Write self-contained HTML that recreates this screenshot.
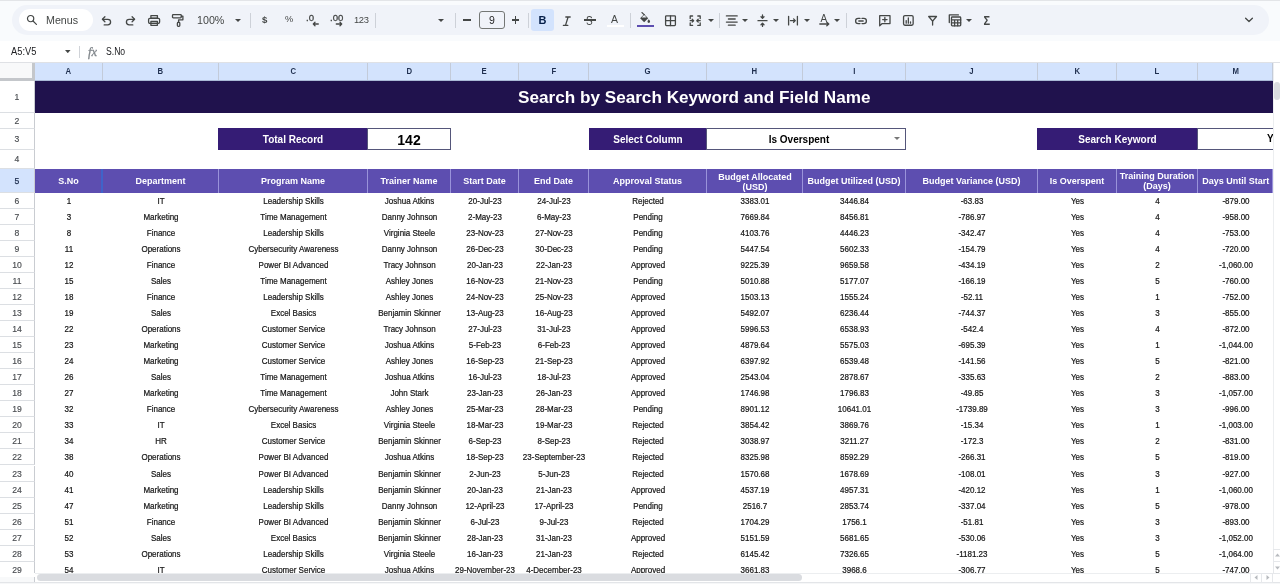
<!DOCTYPE html>
<html><head><meta charset="utf-8"><title>Sheet</title>
<style>
*{box-sizing:border-box}
html,body{margin:0;padding:0}
body{width:1280px;height:584px;overflow:hidden;background:#fff;font-family:"Liberation Sans",sans-serif;position:relative;color:#000}
.abs,.abs *{position:absolute}
div,span,svg{position:absolute}
.tb{left:12px;top:5px;width:1257px;height:30px;border-radius:15px;background:#f0f3f9}
.menus{left:19px;top:9px;width:74px;height:22px;border-radius:11px;background:#fff}
.t{white-space:nowrap;line-height:1}
.ic{stroke:#444746;fill:none;stroke-width:1.3;stroke-linecap:round;stroke-linejoin:round}
.sep{width:1px;background:#cdd1d8;top:13px;height:15px}
.ch{top:63px;height:18px;background:#d3e3fd;border-right:1px solid #c3cbd9;font-size:9px;font-weight:700;color:#1f2f4f;text-align:center;line-height:17px}
.ch b{position:static;display:inline-block;transform:scaleX(.86)}
.rh{left:0;width:35px;background:#fff;border-bottom:1px solid #dcdfe3;border-right:1px solid #c9ccd1;font-size:8.6px;color:#4a4d51;-webkit-text-stroke:.15px #4a4d51;text-align:center}
.hd{top:169px;height:24px;background:#5d4eb0;color:#fff;font-weight:700;font-size:9px;text-align:center;border-right:1px solid #9a93da;display:flex;align-items:center;justify-content:center;line-height:9px;white-space:nowrap}
.c{font-size:8px;text-align:center;white-space:nowrap;height:16px;line-height:16px;color:#151515;-webkit-text-stroke:.2px #151515;transform:translateY(.6px) scaleY(1.09)}
.lab{top:128px;height:22px;background:#351c75;color:#fff;font-weight:700;font-size:10px;text-align:center;line-height:23.5px}
.val{top:128px;height:22px;background:#fff;border:1px solid #55567a;font-weight:700;text-align:center;line-height:22px}
#wrap{left:0;top:0;width:1280px;height:584px;overflow:hidden;will-change:transform}
</style></head><body><div id="wrap">

<div style="left:0;top:0;width:1280px;height:1px;background:#e3e5e8"></div>
<div style="left:0;top:1px;width:1280px;height:40px;background:#f9fbfd"></div>
<div class="tb"></div><div class="menus"></div>
<!-- search -->
<svg style="left:26.3px;top:14px" width="12" height="12" viewBox="0 0 13 13"><circle cx="5" cy="5" r="3.4" class="ic" stroke-width="1.4"/><path d="M7.6 7.6L11.3 11.3" class="ic" stroke-width="1.5"/></svg>
<span class="t" style="left:46px;top:14.7px;font-size:10.7px;color:#444746">Menus</span>
<!-- undo -->
<svg style="left:100px;top:14px" width="13" height="13" viewBox="0 0 13 13"><path d="M4.9 2.8L2.4 5.3L4.9 7.8" class="ic"/><path d="M2.6 5.3H7.8A2.8 2.8 0 0 1 7.8 10.9H4.2" class="ic"/></svg>
<!-- redo -->
<svg style="left:124px;top:14px" width="13" height="13" viewBox="0 0 13 13"><path d="M8.1 2.8L10.6 5.3L8.1 7.8" class="ic"/><path d="M10.4 5.3H5.2A2.8 2.8 0 0 0 5.2 10.9H8.8" class="ic"/></svg>
<!-- print -->
<svg style="left:147px;top:14px" width="15" height="13" viewBox="0 0 15 13"><rect x="3.9" y="1.6" width="6.5" height="2.6" class="ic"/><rect x="1.6" y="4.3" width="11" height="5" rx="1.2" class="ic"/><rect x="3.9" y="7.5" width="6.5" height="3.8" class="ic" fill="#f0f3f9"/></svg>
<!-- paint format -->
<svg style="left:171px;top:13px" width="13" height="15" viewBox="0 0 13 15"><rect x="1.5" y="1.6" width="8.8" height="3.2" rx="0.8" class="ic"/><path d="M10.3 3.2H11.9V6.8H7.6V9.4" class="ic"/><rect x="6.4" y="9.4" width="2.4" height="4" rx="0.8" class="ic"/></svg>
<span class="t" style="left:197px;top:15.2px;font-size:10.7px;color:#444746">100%</span>
<svg style="left:235px;top:19px" width="6" height="3" viewBox="0 0 6 3"><path d="M0 0h6L3 3z" fill="#444746"/></svg>
<div class="sep" style="left:250px"></div>
<span class="t" style="left:262px;top:14.8px;font-size:9.6px;font-weight:700;color:#444746">$</span>
<span class="t" style="left:285px;top:15.3px;font-size:9.2px;color:#444746">%</span>
<!-- .0 <- -->
<span class="t" style="left:306px;top:13.4px;font-size:9.6px;color:#444746;-webkit-text-stroke:.3px #444746">.0</span>
<svg style="left:312px;top:21.3px" width="8" height="6" viewBox="0 0 8 6"><path d="M6.3 3H1.3M3 1.3L1.3 3L3 4.7" class="ic" stroke-width="1.1"/></svg>
<!-- .00 -> -->
<span class="t" style="left:330px;top:13.4px;font-size:9.6px;color:#444746;-webkit-text-stroke:.3px #444746">.00</span>
<svg style="left:335px;top:21.3px" width="8" height="6" viewBox="0 0 8 6"><path d="M1.3 3H6.7M5 1.3L6.7 3L5 4.7" class="ic" stroke-width="1.1"/></svg>
<span class="t" style="left:354px;top:15.4px;font-size:9.4px;letter-spacing:-.35px;color:#444746">123</span>
<div class="sep" style="left:375px"></div>
<svg style="left:438px;top:19px" width="6" height="3" viewBox="0 0 6 3"><path d="M0 0h6L3 3z" fill="#444746"/></svg>
<div class="sep" style="left:455px"></div>
<!-- minus -->
<div style="left:463px;top:19.2px;width:8px;height:1.5px;background:#444746"></div>
<div style="left:479px;top:11px;width:26px;height:18px;border:1px solid #747775;border-radius:3px"></div>
<span class="t" style="left:489px;top:15px;font-size:10.5px;color:#1f1f1f">9</span>
<!-- plus -->
<div style="left:511.5px;top:19.3px;width:7.6px;height:1.3px;background:#444746"></div>
<div style="left:514.65px;top:16.2px;width:1.3px;height:7.6px;background:#444746"></div>
<div class="sep" style="left:528px"></div>
<div style="left:531px;top:9px;width:23px;height:22px;border-radius:3px;background:#d3e3fd"></div>
<span class="t" style="left:538.5px;top:15px;font-size:11px;font-weight:700;color:#041e49">B</span>
<svg style="left:562px;top:15.6px" width="10" height="11" viewBox="0 0 10 11"><path d="M3.8 1H8.2M1.4 9.4H5.8M6.1 1L3.5 9.4" class="ic" stroke-width="1.5" stroke-linecap="butt"/></svg>
<!-- strikethrough -->
<span class="t" style="left:586px;top:14.85px;font-size:12.5px;color:#444746;transform:scaleX(.8);transform-origin:left center">S</span>
<div style="left:583.6px;top:18.6px;width:12.8px;height:2.9px;background:#f0f3f9"></div>
<div style="left:584px;top:19.4px;width:12px;height:1.3px;background:#444746"></div>
<span class="t" style="left:611px;top:13.9px;font-size:10.5px;color:#444746">A</span>
<div style="left:607px;top:24.7px;width:17px;height:2.4px;background:#fff"></div>
<div class="sep" style="left:630px"></div>
<!-- fill bucket -->
<svg style="left:637px;top:12px" width="16" height="12" viewBox="0 0 16 12"><path d="M3.1 6.3L7.1 2.3L11.2 6.3L7.1 10.3z" fill="#444746"/><path d="M7.4 2.9L5 0.6" class="ic" stroke-width="1.3"/><path d="M4.6 5.4L7.1 3L9.6 5.4z" fill="#f0f3f9"/><path d="M11.8 7.3C12.6 8.3 13.1 9 13.1 9.6A1.3 1.3 0 0 1 10.5 9.6C10.5 9 11 8.3 11.8 7.3z" fill="#444746"/></svg>
<div style="left:637px;top:24.6px;width:16.7px;height:2.4px;background:#5d4eb0"></div>
<!-- borders -->
<svg style="left:664px;top:14px" width="13" height="13" viewBox="0 0 13 13"><rect x="1.6" y="1.8" width="9.8" height="9.8" rx="0.8" class="ic" stroke-width="1.3"/><path d="M6.5 1.8V11.6M1.6 6.7H11.4" class="ic" stroke-width="1.3"/></svg>
<!-- merge -->
<svg style="left:688px;top:14px" width="14" height="13" viewBox="0 0 14 13"><path d="M4.6 2H2.2V4.6M9.8 2H12.2V4.6M4.6 11.4H2.2V8.8M9.8 11.4H12.2V8.8" class="ic" stroke-width="1.3"/><path d="M2.2 6.7H5.6M4.2 5.3L5.6 6.7L4.2 8.1M12.2 6.7H8.8M10.2 5.3L8.8 6.7L10.2 8.1" class="ic" stroke-width="1.15"/></svg>
<svg style="left:708.4px;top:19px" width="6" height="3" viewBox="0 0 6 3"><path d="M0 0h6L3 3z" fill="#444746"/></svg>
<div class="sep" style="left:719px"></div>
<!-- halign center -->
<svg style="left:725px;top:14px" width="14" height="13" viewBox="0 0 14 13"><path d="M1.4 1.9H12.2M3.4 5H10.2M1.4 8.1H12.2M3.4 11.2H10.2" class="ic" stroke-width="1.4" stroke-linecap="butt"/></svg>
<svg style="left:742px;top:19px" width="6" height="3" viewBox="0 0 6 3"><path d="M0 0h6L3 3z" fill="#444746"/></svg>
<!-- valign middle -->
<svg style="left:756px;top:13px" width="13" height="15" viewBox="0 0 13 15"><path d="M2 7.7H11" class="ic" stroke-width="1.4" stroke-linecap="butt"/><path d="M6.5 2V5M5 3.7L6.5 5.2L8 3.7M6.5 13.4V10.4M5 11.7L6.5 10.2L8 11.7" class="ic" stroke-width="1.15"/></svg>
<svg style="left:773px;top:19px" width="6" height="3" viewBox="0 0 6 3"><path d="M0 0h6L3 3z" fill="#444746"/></svg>
<!-- wrap / overflow -->
<svg style="left:787px;top:14px" width="12" height="13" viewBox="0 0 12 13"><path d="M1.6 2.3V10.9M10.4 2.3V10.9" class="ic" stroke-width="1.3" stroke-linecap="butt"/><path d="M3.4 6.6H8.2M6.6 4.9L8.3 6.6L6.6 8.3" class="ic" stroke-width="1.15"/></svg>
<svg style="left:804px;top:19px" width="6" height="3" viewBox="0 0 6 3"><path d="M0 0h6L3 3z" fill="#444746"/></svg>
<!-- text rotation -->
<span class="t" style="left:820.6px;top:13.7px;font-size:10px;color:#444746">A</span>
<svg style="left:819px;top:21px" width="12" height="6" viewBox="0 0 12 6"><path d="M0.8 3H9.6M7.8 1.2L9.8 3L7.8 4.8" class="ic" stroke-width="1.1"/></svg>
<svg style="left:834px;top:19px" width="6" height="3" viewBox="0 0 6 3"><path d="M0 0h6L3 3z" fill="#444746"/></svg>
<div class="sep" style="left:846px"></div>
<!-- link -->
<svg style="left:854px;top:15.75px" width="14" height="10" viewBox="0 0 14 10"><path d="M6 2.4H4.2A2.6 2.6 0 0 0 4.2 7.6H6M8 2.4H9.8A2.6 2.6 0 0 1 9.8 7.6H8M4.8 5H9.2" class="ic" stroke-width="1.3"/></svg>
<!-- comment -->
<svg style="left:878px;top:14px" width="14" height="14" viewBox="0 0 14 14"><path d="M1.7 1.7H12V9.6H4.2L1.7 11.8z" class="ic" stroke-width="1.25"/><path d="M6.85 3.4V7.8M4.65 5.6H9.05" class="ic" stroke-width="1.3" stroke-linecap="butt"/></svg>
<!-- chart -->
<svg style="left:902px;top:14px" width="13" height="13" viewBox="0 0 13 13"><rect x="1.55" y="1.65" width="9.6" height="9.6" rx="1.4" class="ic" stroke-width="1.25"/><path d="M4.2 9.2V6.6M6.35 9.2V3.9M8.5 9.2V7.9" class="ic" stroke-width="1.2" stroke-linecap="butt"/></svg>
<!-- filter -->
<svg style="left:927px;top:14px" width="11" height="13" viewBox="0 0 11 13"><path d="M1.7 2.5H9.5L5.6 7.2z" class="ic" stroke-width="1.25"/><path d="M5.6 6.6V11" class="ic" stroke-width="1.7" stroke-linecap="butt"/></svg>
<!-- table view -->
<svg style="left:948px;top:13px" width="15" height="14" viewBox="0 0 15 14"><path d="M1.3 9.6V1.9H10.4" class="ic" stroke-width="1.2"/><rect x="3.5" y="4" width="9.2" height="8.8" rx="0.8" class="ic" stroke-width="1.2"/><path d="M3.5 6.9H12.7M3.5 9.8H12.7M6.6 6.9V12.8M9.7 6.9V12.8" class="ic" stroke-width="1"/></svg>
<svg style="left:965.5px;top:19px" width="6" height="3" viewBox="0 0 6 3"><path d="M0 0h6L3 3z" fill="#444746"/></svg>
<!-- sigma -->
<span class="t" style="left:983.5px;top:15.8px;font-size:11px;font-weight:700;color:#444746;transform:scaleY(1.13)">&#931;</span>
<!-- chevron -->
<svg style="left:1244.3px;top:17.3px" width="10" height="6" viewBox="0 0 10 6"><path d="M1.6 1.2L5 4.5L8.4 1.2" class="ic" stroke-width="1.3"/></svg>

<div style="left:0;top:41px;width:1280px;height:21px;background:#fff"></div>
<div style="left:0;top:62px;width:1280px;height:1px;background:#dfe1e5"></div>
<span class="t" style="left:11px;top:47px;font-size:10px;color:#202124;transform:scaleX(.93);transform-origin:left center">A5:V5</span>
<svg style="left:65px;top:50px" width="5.6" height="3.2" viewBox="0 0 7 4"><path d="M0 0h7L3.5 4z" fill="#444746"/></svg>
<div style="left:79px;top:46px;width:1px;height:12px;background:#d0d3d8"></div>
<span class="t" style="left:88px;top:45.5px;font-size:12.5px;font-style:italic;font-family:'Liberation Serif',serif;color:#80868b;-webkit-text-stroke:.3px #80868b">fx</span>
<span class="t" style="left:106px;top:47px;font-size:10px;color:#202124;transform:scaleX(.86);transform-origin:left center">S.No</span>
<div style="left:0;top:63px;width:35px;height:18px;background:#f8f9fa;border-right:3px solid #c4c7cb;border-bottom:3px solid #c4c7cb"></div>
<div class="ch" style="left:35px;width:68px"><b>A</b></div>
<div class="ch" style="left:103px;width:116px"><b>B</b></div>
<div class="ch" style="left:219px;width:149px"><b>C</b></div>
<div class="ch" style="left:368px;width:83px"><b>D</b></div>
<div class="ch" style="left:451px;width:68px"><b>E</b></div>
<div class="ch" style="left:519px;width:70px"><b>F</b></div>
<div class="ch" style="left:589px;width:118px"><b>G</b></div>
<div class="ch" style="left:707px;width:96px"><b>H</b></div>
<div class="ch" style="left:803px;width:103px"><b>I</b></div>
<div class="ch" style="left:906px;width:132px"><b>J</b></div>
<div class="ch" style="left:1038px;width:79px"><b>K</b></div>
<div class="ch" style="left:1117px;width:81px"><b>L</b></div>
<div class="ch" style="left:1198px;width:75px;padding-left:2px"><b>M</b></div>
<div style="left:35px;top:80px;width:1238px;height:1px;background:#a9b9d6"></div>
<div class="rh" style="top:81px;height:32px;line-height:32px;">1</div>
<div class="rh" style="top:113px;height:16px;line-height:16px;">2</div>
<div class="rh" style="top:129px;height:21px;line-height:21px;">3</div>
<div class="rh" style="top:150px;height:19px;line-height:19px;">4</div>
<div class="rh" style="top:169px;height:24px;line-height:24px; background:#d3e3fd;color:#1f2f4f;-webkit-text-stroke:.25px #1f2f4f;">5</div>
<div class="rh" style="top:193px;height:16px;line-height:16px;">6</div>
<div class="rh" style="top:209px;height:16px;line-height:16px;">7</div>
<div class="rh" style="top:225px;height:16px;line-height:16px;">8</div>
<div class="rh" style="top:241px;height:16px;line-height:16px;">9</div>
<div class="rh" style="top:257px;height:16px;line-height:16px;">10</div>
<div class="rh" style="top:273px;height:16px;line-height:16px;">11</div>
<div class="rh" style="top:289px;height:16px;line-height:16px;">12</div>
<div class="rh" style="top:305px;height:16px;line-height:16px;">13</div>
<div class="rh" style="top:321px;height:16px;line-height:16px;">14</div>
<div class="rh" style="top:337px;height:16px;line-height:16px;">15</div>
<div class="rh" style="top:353px;height:16px;line-height:16px;">16</div>
<div class="rh" style="top:369px;height:16px;line-height:16px;">17</div>
<div class="rh" style="top:385px;height:16px;line-height:16px;">18</div>
<div class="rh" style="top:401px;height:16px;line-height:16px;">19</div>
<div class="rh" style="top:417px;height:16px;line-height:16px;">20</div>
<div class="rh" style="top:433px;height:16px;line-height:16px;">21</div>
<div class="rh" style="top:449px;height:16px;line-height:16px;">22</div>
<div class="rh" style="top:466px;height:16px;line-height:16px;">23</div>
<div class="rh" style="top:482px;height:16px;line-height:16px;">24</div>
<div class="rh" style="top:498px;height:16px;line-height:16px;">25</div>
<div class="rh" style="top:514px;height:16px;line-height:16px;">26</div>
<div class="rh" style="top:530px;height:16px;line-height:16px;">27</div>
<div class="rh" style="top:546px;height:16px;line-height:16px;">28</div>
<div class="rh" style="top:562px;height:16px;line-height:16px;">29</div>
<div style="left:35px;top:81px;width:1238px;height:32px;background:#20124d"></div>
<span class="t" style="left:518px;top:88.9px;font-size:17.15px;font-weight:700;color:#fff">Search by Search Keyword and Field Name</span>
<div class="lab" style="left:218px;width:150px">Total Record</div>
<div class="val" style="left:367px;width:84px;font-size:14px">142</div>
<div class="lab" style="left:589px;width:118px">Select Column</div>
<div class="val" style="left:706px;width:200px;font-size:10px;padding-right:14px">Is Overspent</div>
<svg style="left:894px;top:137px" width="6" height="3" viewBox="0 0 6 3"><path d="M0 0h6L3 3z" fill="#777"/></svg>
<div class="lab" style="left:1037px;width:161px">Search Keyword</div>
<div class="val" style="left:1197px;width:90px;font-size:10px;border-right:none"></div>
<span class="t" style="left:1267px;top:134px;font-size:10px;font-weight:700;width:6px;overflow:hidden">Y</span>
<div class="hd" style="left:35px;width:68px"><span style="position:static;display:block;transform:translateY(-.5px) scaleY(1.05)">S.No</span></div>
<div class="hd" style="left:103px;width:116px"><span style="position:static;display:block;transform:translateY(-.5px) scaleY(1.05)">Department</span></div>
<div class="hd" style="left:219px;width:149px"><span style="position:static;display:block;transform:translateY(-.5px) scaleY(1.05)">Program Name</span></div>
<div class="hd" style="left:368px;width:83px"><span style="position:static;display:block;transform:translateY(-.5px) scaleY(1.05)">Trainer Name</span></div>
<div class="hd" style="left:451px;width:68px"><span style="position:static;display:block;transform:translateY(-.5px) scaleY(1.05)">Start Date</span></div>
<div class="hd" style="left:519px;width:70px"><span style="position:static;display:block;transform:translateY(-.5px) scaleY(1.05)">End Date</span></div>
<div class="hd" style="left:589px;width:118px"><span style="position:static;display:block;transform:translateY(-.5px) scaleY(1.05)">Approval Status</span></div>
<div class="hd" style="left:707px;width:96px"><span style="position:static;display:block;line-height:10.15px;transform:translate(.5px,.77px) scaleY(1.05)">Budget Allocated<br>(USD)</span></div>
<div class="hd" style="left:803px;width:103px"><span style="position:static;display:block;transform:translateY(-.5px) scaleY(1.05)">Budget Utilized (USD)</span></div>
<div class="hd" style="left:906px;width:132px"><span style="position:static;display:block;transform:translateY(-.5px) scaleY(1.05)">Budget Variance (USD)</span></div>
<div class="hd" style="left:1038px;width:79px"><span style="position:static;display:block;transform:translateY(-.5px) scaleY(1.05)">Is Overspent</span></div>
<div class="hd" style="left:1117px;width:81px"><span style="position:static;display:block;line-height:10.15px;transform:translate(0,-.25px) scaleY(1.05)">Training Duration<br>(Days)</span></div>
<div class="hd" style="left:1198px;width:75px"><span style="position:static;display:block;transform:translate(.8px,-.5px) scaleY(1.05)">Days Until Start</span></div>
<div style="left:101px;top:169px;width:2px;height:24px;background:#3f63c9"></div>
<div class="c" style="left:35px;top:193px;width:68px">1</div>
<div class="c" style="left:103px;top:193px;width:116px">IT</div>
<div class="c" style="left:219px;top:193px;width:149px">Leadership Skills</div>
<div class="c" style="left:368px;top:193px;width:83px">Joshua Atkins</div>
<div class="c" style="left:451px;top:193px;width:68px">20-Jul-23</div>
<div class="c" style="left:519px;top:193px;width:70px">24-Jul-23</div>
<div class="c" style="left:589px;top:193px;width:118px">Rejected</div>
<div class="c" style="left:707px;top:193px;width:96px">3383.01</div>
<div class="c" style="left:803px;top:193px;width:103px">3446.84</div>
<div class="c" style="left:906px;top:193px;width:132px">-63.83</div>
<div class="c" style="left:1038px;top:193px;width:79px">Yes</div>
<div class="c" style="left:1117px;top:193px;width:81px">4</div>
<div class="c" style="left:1198px;top:193px;width:75px;padding-left:1px">-879.00</div>
<div class="c" style="left:35px;top:209.03px;width:68px">3</div>
<div class="c" style="left:103px;top:209.03px;width:116px">Marketing</div>
<div class="c" style="left:219px;top:209.03px;width:149px">Time Management</div>
<div class="c" style="left:368px;top:209.03px;width:83px">Danny Johnson</div>
<div class="c" style="left:451px;top:209.03px;width:68px">2-May-23</div>
<div class="c" style="left:519px;top:209.03px;width:70px">6-May-23</div>
<div class="c" style="left:589px;top:209.03px;width:118px">Pending</div>
<div class="c" style="left:707px;top:209.03px;width:96px">7669.84</div>
<div class="c" style="left:803px;top:209.03px;width:103px">8456.81</div>
<div class="c" style="left:906px;top:209.03px;width:132px">-786.97</div>
<div class="c" style="left:1038px;top:209.03px;width:79px">Yes</div>
<div class="c" style="left:1117px;top:209.03px;width:81px">4</div>
<div class="c" style="left:1198px;top:209.03px;width:75px;padding-left:1px">-958.00</div>
<div class="c" style="left:35px;top:225.06px;width:68px">8</div>
<div class="c" style="left:103px;top:225.06px;width:116px">Finance</div>
<div class="c" style="left:219px;top:225.06px;width:149px">Leadership Skills</div>
<div class="c" style="left:368px;top:225.06px;width:83px">Virginia Steele</div>
<div class="c" style="left:451px;top:225.06px;width:68px">23-Nov-23</div>
<div class="c" style="left:519px;top:225.06px;width:70px">27-Nov-23</div>
<div class="c" style="left:589px;top:225.06px;width:118px">Pending</div>
<div class="c" style="left:707px;top:225.06px;width:96px">4103.76</div>
<div class="c" style="left:803px;top:225.06px;width:103px">4446.23</div>
<div class="c" style="left:906px;top:225.06px;width:132px">-342.47</div>
<div class="c" style="left:1038px;top:225.06px;width:79px">Yes</div>
<div class="c" style="left:1117px;top:225.06px;width:81px">4</div>
<div class="c" style="left:1198px;top:225.06px;width:75px;padding-left:1px">-753.00</div>
<div class="c" style="left:35px;top:241.09px;width:68px">11</div>
<div class="c" style="left:103px;top:241.09px;width:116px">Operations</div>
<div class="c" style="left:219px;top:241.09px;width:149px">Cybersecurity Awareness</div>
<div class="c" style="left:368px;top:241.09px;width:83px">Danny Johnson</div>
<div class="c" style="left:451px;top:241.09px;width:68px">26-Dec-23</div>
<div class="c" style="left:519px;top:241.09px;width:70px">30-Dec-23</div>
<div class="c" style="left:589px;top:241.09px;width:118px">Pending</div>
<div class="c" style="left:707px;top:241.09px;width:96px">5447.54</div>
<div class="c" style="left:803px;top:241.09px;width:103px">5602.33</div>
<div class="c" style="left:906px;top:241.09px;width:132px">-154.79</div>
<div class="c" style="left:1038px;top:241.09px;width:79px">Yes</div>
<div class="c" style="left:1117px;top:241.09px;width:81px">4</div>
<div class="c" style="left:1198px;top:241.09px;width:75px;padding-left:1px">-720.00</div>
<div class="c" style="left:35px;top:257.12px;width:68px">12</div>
<div class="c" style="left:103px;top:257.12px;width:116px">Finance</div>
<div class="c" style="left:219px;top:257.12px;width:149px">Power BI Advanced</div>
<div class="c" style="left:368px;top:257.12px;width:83px">Tracy Johnson</div>
<div class="c" style="left:451px;top:257.12px;width:68px">20-Jan-23</div>
<div class="c" style="left:519px;top:257.12px;width:70px">22-Jan-23</div>
<div class="c" style="left:589px;top:257.12px;width:118px">Approved</div>
<div class="c" style="left:707px;top:257.12px;width:96px">9225.39</div>
<div class="c" style="left:803px;top:257.12px;width:103px">9659.58</div>
<div class="c" style="left:906px;top:257.12px;width:132px">-434.19</div>
<div class="c" style="left:1038px;top:257.12px;width:79px">Yes</div>
<div class="c" style="left:1117px;top:257.12px;width:81px">2</div>
<div class="c" style="left:1198px;top:257.12px;width:75px;padding-left:1px">-1,060.00</div>
<div class="c" style="left:35px;top:273.15px;width:68px">15</div>
<div class="c" style="left:103px;top:273.15px;width:116px">Sales</div>
<div class="c" style="left:219px;top:273.15px;width:149px">Time Management</div>
<div class="c" style="left:368px;top:273.15px;width:83px">Ashley Jones</div>
<div class="c" style="left:451px;top:273.15px;width:68px">16-Nov-23</div>
<div class="c" style="left:519px;top:273.15px;width:70px">21-Nov-23</div>
<div class="c" style="left:589px;top:273.15px;width:118px">Pending</div>
<div class="c" style="left:707px;top:273.15px;width:96px">5010.88</div>
<div class="c" style="left:803px;top:273.15px;width:103px">5177.07</div>
<div class="c" style="left:906px;top:273.15px;width:132px">-166.19</div>
<div class="c" style="left:1038px;top:273.15px;width:79px">Yes</div>
<div class="c" style="left:1117px;top:273.15px;width:81px">5</div>
<div class="c" style="left:1198px;top:273.15px;width:75px;padding-left:1px">-760.00</div>
<div class="c" style="left:35px;top:289.18px;width:68px">18</div>
<div class="c" style="left:103px;top:289.18px;width:116px">Finance</div>
<div class="c" style="left:219px;top:289.18px;width:149px">Leadership Skills</div>
<div class="c" style="left:368px;top:289.18px;width:83px">Ashley Jones</div>
<div class="c" style="left:451px;top:289.18px;width:68px">24-Nov-23</div>
<div class="c" style="left:519px;top:289.18px;width:70px">25-Nov-23</div>
<div class="c" style="left:589px;top:289.18px;width:118px">Approved</div>
<div class="c" style="left:707px;top:289.18px;width:96px">1503.13</div>
<div class="c" style="left:803px;top:289.18px;width:103px">1555.24</div>
<div class="c" style="left:906px;top:289.18px;width:132px">-52.11</div>
<div class="c" style="left:1038px;top:289.18px;width:79px">Yes</div>
<div class="c" style="left:1117px;top:289.18px;width:81px">1</div>
<div class="c" style="left:1198px;top:289.18px;width:75px;padding-left:1px">-752.00</div>
<div class="c" style="left:35px;top:305.21px;width:68px">19</div>
<div class="c" style="left:103px;top:305.21px;width:116px">Sales</div>
<div class="c" style="left:219px;top:305.21px;width:149px">Excel Basics</div>
<div class="c" style="left:368px;top:305.21px;width:83px">Benjamin Skinner</div>
<div class="c" style="left:451px;top:305.21px;width:68px">13-Aug-23</div>
<div class="c" style="left:519px;top:305.21px;width:70px">16-Aug-23</div>
<div class="c" style="left:589px;top:305.21px;width:118px">Approved</div>
<div class="c" style="left:707px;top:305.21px;width:96px">5492.07</div>
<div class="c" style="left:803px;top:305.21px;width:103px">6236.44</div>
<div class="c" style="left:906px;top:305.21px;width:132px">-744.37</div>
<div class="c" style="left:1038px;top:305.21px;width:79px">Yes</div>
<div class="c" style="left:1117px;top:305.21px;width:81px">3</div>
<div class="c" style="left:1198px;top:305.21px;width:75px;padding-left:1px">-855.00</div>
<div class="c" style="left:35px;top:321.24px;width:68px">22</div>
<div class="c" style="left:103px;top:321.24px;width:116px">Operations</div>
<div class="c" style="left:219px;top:321.24px;width:149px">Customer Service</div>
<div class="c" style="left:368px;top:321.24px;width:83px">Tracy Johnson</div>
<div class="c" style="left:451px;top:321.24px;width:68px">27-Jul-23</div>
<div class="c" style="left:519px;top:321.24px;width:70px">31-Jul-23</div>
<div class="c" style="left:589px;top:321.24px;width:118px">Approved</div>
<div class="c" style="left:707px;top:321.24px;width:96px">5996.53</div>
<div class="c" style="left:803px;top:321.24px;width:103px">6538.93</div>
<div class="c" style="left:906px;top:321.24px;width:132px">-542.4</div>
<div class="c" style="left:1038px;top:321.24px;width:79px">Yes</div>
<div class="c" style="left:1117px;top:321.24px;width:81px">4</div>
<div class="c" style="left:1198px;top:321.24px;width:75px;padding-left:1px">-872.00</div>
<div class="c" style="left:35px;top:337.27px;width:68px">23</div>
<div class="c" style="left:103px;top:337.27px;width:116px">Marketing</div>
<div class="c" style="left:219px;top:337.27px;width:149px">Customer Service</div>
<div class="c" style="left:368px;top:337.27px;width:83px">Joshua Atkins</div>
<div class="c" style="left:451px;top:337.27px;width:68px">5-Feb-23</div>
<div class="c" style="left:519px;top:337.27px;width:70px">6-Feb-23</div>
<div class="c" style="left:589px;top:337.27px;width:118px">Approved</div>
<div class="c" style="left:707px;top:337.27px;width:96px">4879.64</div>
<div class="c" style="left:803px;top:337.27px;width:103px">5575.03</div>
<div class="c" style="left:906px;top:337.27px;width:132px">-695.39</div>
<div class="c" style="left:1038px;top:337.27px;width:79px">Yes</div>
<div class="c" style="left:1117px;top:337.27px;width:81px">1</div>
<div class="c" style="left:1198px;top:337.27px;width:75px;padding-left:1px">-1,044.00</div>
<div class="c" style="left:35px;top:353.3px;width:68px">24</div>
<div class="c" style="left:103px;top:353.3px;width:116px">Marketing</div>
<div class="c" style="left:219px;top:353.3px;width:149px">Customer Service</div>
<div class="c" style="left:368px;top:353.3px;width:83px">Ashley Jones</div>
<div class="c" style="left:451px;top:353.3px;width:68px">16-Sep-23</div>
<div class="c" style="left:519px;top:353.3px;width:70px">21-Sep-23</div>
<div class="c" style="left:589px;top:353.3px;width:118px">Approved</div>
<div class="c" style="left:707px;top:353.3px;width:96px">6397.92</div>
<div class="c" style="left:803px;top:353.3px;width:103px">6539.48</div>
<div class="c" style="left:906px;top:353.3px;width:132px">-141.56</div>
<div class="c" style="left:1038px;top:353.3px;width:79px">Yes</div>
<div class="c" style="left:1117px;top:353.3px;width:81px">5</div>
<div class="c" style="left:1198px;top:353.3px;width:75px;padding-left:1px">-821.00</div>
<div class="c" style="left:35px;top:369.33px;width:68px">26</div>
<div class="c" style="left:103px;top:369.33px;width:116px">Sales</div>
<div class="c" style="left:219px;top:369.33px;width:149px">Time Management</div>
<div class="c" style="left:368px;top:369.33px;width:83px">Joshua Atkins</div>
<div class="c" style="left:451px;top:369.33px;width:68px">16-Jul-23</div>
<div class="c" style="left:519px;top:369.33px;width:70px">18-Jul-23</div>
<div class="c" style="left:589px;top:369.33px;width:118px">Approved</div>
<div class="c" style="left:707px;top:369.33px;width:96px">2543.04</div>
<div class="c" style="left:803px;top:369.33px;width:103px">2878.67</div>
<div class="c" style="left:906px;top:369.33px;width:132px">-335.63</div>
<div class="c" style="left:1038px;top:369.33px;width:79px">Yes</div>
<div class="c" style="left:1117px;top:369.33px;width:81px">2</div>
<div class="c" style="left:1198px;top:369.33px;width:75px;padding-left:1px">-883.00</div>
<div class="c" style="left:35px;top:385.36px;width:68px">27</div>
<div class="c" style="left:103px;top:385.36px;width:116px">Marketing</div>
<div class="c" style="left:219px;top:385.36px;width:149px">Time Management</div>
<div class="c" style="left:368px;top:385.36px;width:83px">John Stark</div>
<div class="c" style="left:451px;top:385.36px;width:68px">23-Jan-23</div>
<div class="c" style="left:519px;top:385.36px;width:70px">26-Jan-23</div>
<div class="c" style="left:589px;top:385.36px;width:118px">Approved</div>
<div class="c" style="left:707px;top:385.36px;width:96px">1746.98</div>
<div class="c" style="left:803px;top:385.36px;width:103px">1796.83</div>
<div class="c" style="left:906px;top:385.36px;width:132px">-49.85</div>
<div class="c" style="left:1038px;top:385.36px;width:79px">Yes</div>
<div class="c" style="left:1117px;top:385.36px;width:81px">3</div>
<div class="c" style="left:1198px;top:385.36px;width:75px;padding-left:1px">-1,057.00</div>
<div class="c" style="left:35px;top:401.39px;width:68px">32</div>
<div class="c" style="left:103px;top:401.39px;width:116px">Finance</div>
<div class="c" style="left:219px;top:401.39px;width:149px">Cybersecurity Awareness</div>
<div class="c" style="left:368px;top:401.39px;width:83px">Ashley Jones</div>
<div class="c" style="left:451px;top:401.39px;width:68px">25-Mar-23</div>
<div class="c" style="left:519px;top:401.39px;width:70px">28-Mar-23</div>
<div class="c" style="left:589px;top:401.39px;width:118px">Pending</div>
<div class="c" style="left:707px;top:401.39px;width:96px">8901.12</div>
<div class="c" style="left:803px;top:401.39px;width:103px">10641.01</div>
<div class="c" style="left:906px;top:401.39px;width:132px">-1739.89</div>
<div class="c" style="left:1038px;top:401.39px;width:79px">Yes</div>
<div class="c" style="left:1117px;top:401.39px;width:81px">3</div>
<div class="c" style="left:1198px;top:401.39px;width:75px;padding-left:1px">-996.00</div>
<div class="c" style="left:35px;top:417.42px;width:68px">33</div>
<div class="c" style="left:103px;top:417.42px;width:116px">IT</div>
<div class="c" style="left:219px;top:417.42px;width:149px">Excel Basics</div>
<div class="c" style="left:368px;top:417.42px;width:83px">Virginia Steele</div>
<div class="c" style="left:451px;top:417.42px;width:68px">18-Mar-23</div>
<div class="c" style="left:519px;top:417.42px;width:70px">19-Mar-23</div>
<div class="c" style="left:589px;top:417.42px;width:118px">Rejected</div>
<div class="c" style="left:707px;top:417.42px;width:96px">3854.42</div>
<div class="c" style="left:803px;top:417.42px;width:103px">3869.76</div>
<div class="c" style="left:906px;top:417.42px;width:132px">-15.34</div>
<div class="c" style="left:1038px;top:417.42px;width:79px">Yes</div>
<div class="c" style="left:1117px;top:417.42px;width:81px">1</div>
<div class="c" style="left:1198px;top:417.42px;width:75px;padding-left:1px">-1,003.00</div>
<div class="c" style="left:35px;top:433.45px;width:68px">34</div>
<div class="c" style="left:103px;top:433.45px;width:116px">HR</div>
<div class="c" style="left:219px;top:433.45px;width:149px">Customer Service</div>
<div class="c" style="left:368px;top:433.45px;width:83px">Benjamin Skinner</div>
<div class="c" style="left:451px;top:433.45px;width:68px">6-Sep-23</div>
<div class="c" style="left:519px;top:433.45px;width:70px">8-Sep-23</div>
<div class="c" style="left:589px;top:433.45px;width:118px">Rejected</div>
<div class="c" style="left:707px;top:433.45px;width:96px">3038.97</div>
<div class="c" style="left:803px;top:433.45px;width:103px">3211.27</div>
<div class="c" style="left:906px;top:433.45px;width:132px">-172.3</div>
<div class="c" style="left:1038px;top:433.45px;width:79px">Yes</div>
<div class="c" style="left:1117px;top:433.45px;width:81px">2</div>
<div class="c" style="left:1198px;top:433.45px;width:75px;padding-left:1px">-831.00</div>
<div class="c" style="left:35px;top:449.48px;width:68px">38</div>
<div class="c" style="left:103px;top:449.48px;width:116px">Operations</div>
<div class="c" style="left:219px;top:449.48px;width:149px">Power BI Advanced</div>
<div class="c" style="left:368px;top:449.48px;width:83px">Joshua Atkins</div>
<div class="c" style="left:451px;top:449.48px;width:68px">18-Sep-23</div>
<div class="c" style="left:519px;top:449.48px;width:70px">23-September-23</div>
<div class="c" style="left:589px;top:449.48px;width:118px">Rejected</div>
<div class="c" style="left:707px;top:449.48px;width:96px">8325.98</div>
<div class="c" style="left:803px;top:449.48px;width:103px">8592.29</div>
<div class="c" style="left:906px;top:449.48px;width:132px">-266.31</div>
<div class="c" style="left:1038px;top:449.48px;width:79px">Yes</div>
<div class="c" style="left:1117px;top:449.48px;width:81px">5</div>
<div class="c" style="left:1198px;top:449.48px;width:75px;padding-left:1px">-819.00</div>
<div class="c" style="left:35px;top:465.51px;width:68px">40</div>
<div class="c" style="left:103px;top:465.51px;width:116px">Sales</div>
<div class="c" style="left:219px;top:465.51px;width:149px">Power BI Advanced</div>
<div class="c" style="left:368px;top:465.51px;width:83px">Benjamin Skinner</div>
<div class="c" style="left:451px;top:465.51px;width:68px">2-Jun-23</div>
<div class="c" style="left:519px;top:465.51px;width:70px">5-Jun-23</div>
<div class="c" style="left:589px;top:465.51px;width:118px">Rejected</div>
<div class="c" style="left:707px;top:465.51px;width:96px">1570.68</div>
<div class="c" style="left:803px;top:465.51px;width:103px">1678.69</div>
<div class="c" style="left:906px;top:465.51px;width:132px">-108.01</div>
<div class="c" style="left:1038px;top:465.51px;width:79px">Yes</div>
<div class="c" style="left:1117px;top:465.51px;width:81px">3</div>
<div class="c" style="left:1198px;top:465.51px;width:75px;padding-left:1px">-927.00</div>
<div class="c" style="left:35px;top:481.54px;width:68px">41</div>
<div class="c" style="left:103px;top:481.54px;width:116px">Marketing</div>
<div class="c" style="left:219px;top:481.54px;width:149px">Leadership Skills</div>
<div class="c" style="left:368px;top:481.54px;width:83px">Benjamin Skinner</div>
<div class="c" style="left:451px;top:481.54px;width:68px">20-Jan-23</div>
<div class="c" style="left:519px;top:481.54px;width:70px">21-Jan-23</div>
<div class="c" style="left:589px;top:481.54px;width:118px">Approved</div>
<div class="c" style="left:707px;top:481.54px;width:96px">4537.19</div>
<div class="c" style="left:803px;top:481.54px;width:103px">4957.31</div>
<div class="c" style="left:906px;top:481.54px;width:132px">-420.12</div>
<div class="c" style="left:1038px;top:481.54px;width:79px">Yes</div>
<div class="c" style="left:1117px;top:481.54px;width:81px">1</div>
<div class="c" style="left:1198px;top:481.54px;width:75px;padding-left:1px">-1,060.00</div>
<div class="c" style="left:35px;top:497.57px;width:68px">47</div>
<div class="c" style="left:103px;top:497.57px;width:116px">Marketing</div>
<div class="c" style="left:219px;top:497.57px;width:149px">Leadership Skills</div>
<div class="c" style="left:368px;top:497.57px;width:83px">Danny Johnson</div>
<div class="c" style="left:451px;top:497.57px;width:68px">12-April-23</div>
<div class="c" style="left:519px;top:497.57px;width:70px">17-April-23</div>
<div class="c" style="left:589px;top:497.57px;width:118px">Pending</div>
<div class="c" style="left:707px;top:497.57px;width:96px">2516.7</div>
<div class="c" style="left:803px;top:497.57px;width:103px">2853.74</div>
<div class="c" style="left:906px;top:497.57px;width:132px">-337.04</div>
<div class="c" style="left:1038px;top:497.57px;width:79px">Yes</div>
<div class="c" style="left:1117px;top:497.57px;width:81px">5</div>
<div class="c" style="left:1198px;top:497.57px;width:75px;padding-left:1px">-978.00</div>
<div class="c" style="left:35px;top:513.6px;width:68px">51</div>
<div class="c" style="left:103px;top:513.6px;width:116px">Finance</div>
<div class="c" style="left:219px;top:513.6px;width:149px">Power BI Advanced</div>
<div class="c" style="left:368px;top:513.6px;width:83px">Benjamin Skinner</div>
<div class="c" style="left:451px;top:513.6px;width:68px">6-Jul-23</div>
<div class="c" style="left:519px;top:513.6px;width:70px">9-Jul-23</div>
<div class="c" style="left:589px;top:513.6px;width:118px">Rejected</div>
<div class="c" style="left:707px;top:513.6px;width:96px">1704.29</div>
<div class="c" style="left:803px;top:513.6px;width:103px">1756.1</div>
<div class="c" style="left:906px;top:513.6px;width:132px">-51.81</div>
<div class="c" style="left:1038px;top:513.6px;width:79px">Yes</div>
<div class="c" style="left:1117px;top:513.6px;width:81px">3</div>
<div class="c" style="left:1198px;top:513.6px;width:75px;padding-left:1px">-893.00</div>
<div class="c" style="left:35px;top:529.63px;width:68px">52</div>
<div class="c" style="left:103px;top:529.63px;width:116px">Sales</div>
<div class="c" style="left:219px;top:529.63px;width:149px">Excel Basics</div>
<div class="c" style="left:368px;top:529.63px;width:83px">Benjamin Skinner</div>
<div class="c" style="left:451px;top:529.63px;width:68px">28-Jan-23</div>
<div class="c" style="left:519px;top:529.63px;width:70px">31-Jan-23</div>
<div class="c" style="left:589px;top:529.63px;width:118px">Approved</div>
<div class="c" style="left:707px;top:529.63px;width:96px">5151.59</div>
<div class="c" style="left:803px;top:529.63px;width:103px">5681.65</div>
<div class="c" style="left:906px;top:529.63px;width:132px">-530.06</div>
<div class="c" style="left:1038px;top:529.63px;width:79px">Yes</div>
<div class="c" style="left:1117px;top:529.63px;width:81px">3</div>
<div class="c" style="left:1198px;top:529.63px;width:75px;padding-left:1px">-1,052.00</div>
<div class="c" style="left:35px;top:545.66px;width:68px">53</div>
<div class="c" style="left:103px;top:545.66px;width:116px">Operations</div>
<div class="c" style="left:219px;top:545.66px;width:149px">Leadership Skills</div>
<div class="c" style="left:368px;top:545.66px;width:83px">Virginia Steele</div>
<div class="c" style="left:451px;top:545.66px;width:68px">16-Jan-23</div>
<div class="c" style="left:519px;top:545.66px;width:70px">21-Jan-23</div>
<div class="c" style="left:589px;top:545.66px;width:118px">Rejected</div>
<div class="c" style="left:707px;top:545.66px;width:96px">6145.42</div>
<div class="c" style="left:803px;top:545.66px;width:103px">7326.65</div>
<div class="c" style="left:906px;top:545.66px;width:132px">-1181.23</div>
<div class="c" style="left:1038px;top:545.66px;width:79px">Yes</div>
<div class="c" style="left:1117px;top:545.66px;width:81px">5</div>
<div class="c" style="left:1198px;top:545.66px;width:75px;padding-left:1px">-1,064.00</div>
<div class="c" style="left:35px;top:561.69px;width:68px">54</div>
<div class="c" style="left:103px;top:561.69px;width:116px">IT</div>
<div class="c" style="left:219px;top:561.69px;width:149px">Customer Service</div>
<div class="c" style="left:368px;top:561.69px;width:83px">Joshua Atkins</div>
<div class="c" style="left:451px;top:561.69px;width:68px">29-November-23</div>
<div class="c" style="left:519px;top:561.69px;width:70px">4-December-23</div>
<div class="c" style="left:589px;top:561.69px;width:118px">Approved</div>
<div class="c" style="left:707px;top:561.69px;width:96px">3661.83</div>
<div class="c" style="left:803px;top:561.69px;width:103px">3968.6</div>
<div class="c" style="left:906px;top:561.69px;width:132px">-306.77</div>
<div class="c" style="left:1038px;top:561.69px;width:79px">Yes</div>
<div class="c" style="left:1117px;top:561.69px;width:81px">5</div>
<div class="c" style="left:1198px;top:561.69px;width:75px;padding-left:1px">-747.00</div>
<div style="left:0;top:573px;width:1280px;height:11px;background:#fff"></div>
<div style="left:35px;top:573px;width:1215px;height:1px;background:#eceef0"></div>
<div style="left:0;top:577px;width:35px;height:7px;background:#f8f9fa;border-right:1px solid #c9ccd1"></div>
<div style="left:37px;top:574px;width:765px;height:7px;border-radius:4px;background:#dadce0"></div>
<div style="left:0;top:582px;width:1280px;height:1px;background:#e3e5e8"></div>
<div style="left:0;top:583px;width:1280px;height:1px;background:#f6f7f8"></div>
<div style="left:1250px;top:573px;width:12px;height:10px;border:1px solid #e6e8eb;background:#fff"></div>
<div style="left:1261px;top:573px;width:12px;height:10px;border:1px solid #e6e8eb;background:#fff"></div>
<svg style="left:1254px;top:575px" width="4" height="5" viewBox="0 0 4 5"><path d="M3.5 0L0.5 2.5L3.5 5z" fill="#b8bbbf"/></svg>
<svg style="left:1266px;top:575px" width="4" height="5" viewBox="0 0 4 5"><path d="M0.5 0L3.5 2.5L0.5 5z" fill="#b8bbbf"/></svg>
<div style="left:1273px;top:63px;width:7px;height:510px;background:#fff;border-left:1px solid #eceef0"></div>
<div style="left:1274px;top:82px;width:6px;height:18px;border-radius:3px;background:#dadce0"></div>
<div style="left:1273px;top:549px;width:8px;height:13px;border:1px solid #e6e8eb;background:#fff"></div>
<div style="left:1273px;top:561px;width:8px;height:13px;border:1px solid #e6e8eb;background:#fff"></div>
<svg style="left:1275px;top:553px" width="5" height="4" viewBox="0 0 5 4"><path d="M0 3.5L2.5 0.5L5 3.5z" fill="#b8bbbf"/></svg>
<svg style="left:1275px;top:566px" width="5" height="4" viewBox="0 0 5 4"><path d="M0 0.5L2.5 3.5L5 0.5z" fill="#b8bbbf"/></svg>
</div></body></html>
